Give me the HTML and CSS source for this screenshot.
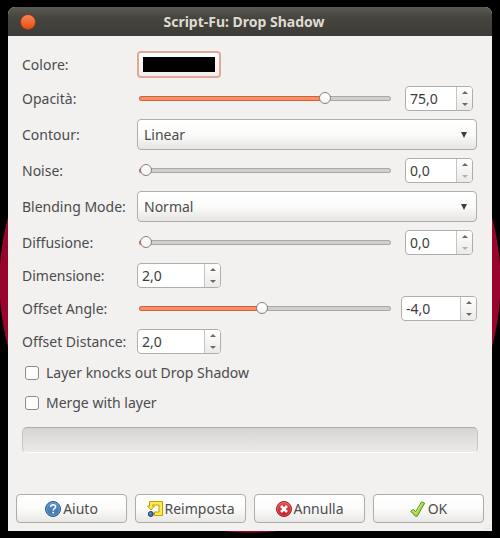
FILE: index.html
```html
<!DOCTYPE html>
<html lang="it">
<head>
  <meta charset="UTF-8" />
  <meta name="viewport" content="width=device-width, initial-scale=1.0"/>
  <title>Script-Fu: Drop Shadow</title>
  <link rel="stylesheet" href="styles.css">
</head>
<body>
  <div class="window">
    <header class="titlebar">
      <button type="button" class="close" aria-label="Chiudi"></button>
      <h1>Script-Fu: Drop Shadow</h1>
    </header>

    <form class="dialog">
      <div class="fields">
        <label for="color">Colore:</label>
        <input type="color" id="color" class="swatch" value="#000000">

        <label for="opacity">Opacità:</label>
        <div class="scale">
          <input type="range" min="0" max="100" value="75" style="--pos: 0.75" aria-label="Opacità">
          <div class="spin">
            <input type="text" id="opacity" value="75,0">
            <div class="arrows">
              <button type="button" class="up" aria-label="Aumenta"></button>
              <button type="button" class="down" aria-label="Diminuisci"></button>
            </div>
          </div>
        </div>

        <label for="contour">Contour:</label>
        <div class="combo">
          <select id="contour">
            <option>Linear</option>
          </select>
        </div>

        <label for="noise">Noise:</label>
        <div class="scale">
          <input type="range" min="0" max="100" value="0" style="--pos: 0" aria-label="Noise">
          <div class="spin">
            <input type="text" id="noise" value="0,0">
            <div class="arrows">
              <button type="button" class="up" aria-label="Aumenta"></button>
              <button type="button" class="down" aria-label="Diminuisci" disabled></button>
            </div>
          </div>
        </div>

        <label for="mode">Blending Mode:</label>
        <div class="combo">
          <select id="mode">
            <option>Normal</option>
          </select>
        </div>

        <label for="spread">Diffusione:</label>
        <div class="scale">
          <input type="range" min="0" max="100" value="0" style="--pos: 0" aria-label="Diffusione">
          <div class="spin">
            <input type="text" id="spread" value="0,0">
            <div class="arrows">
              <button type="button" class="up" aria-label="Aumenta"></button>
              <button type="button" class="down" aria-label="Diminuisci" disabled></button>
            </div>
          </div>
        </div>

        <label for="size">Dimensione:</label>
        <div class="spin spin-large">
          <input type="text" id="size" value="2,0">
          <div class="arrows">
            <button type="button" class="up" aria-label="Aumenta"></button>
            <button type="button" class="down" aria-label="Diminuisci"></button>
          </div>
        </div>

        <label for="angle">Offset Angle:</label>
        <div class="scale">
          <input type="range" min="-180" max="180" value="-4" style="--pos: 0.489" aria-label="Offset Angle">
          <div class="spin spin-medium">
            <input type="text" id="angle" value="-4,0">
            <div class="arrows">
              <button type="button" class="up" aria-label="Aumenta"></button>
              <button type="button" class="down" aria-label="Diminuisci"></button>
            </div>
          </div>
        </div>

        <label for="distance">Offset Distance:</label>
        <div class="spin spin-large">
          <input type="text" id="distance" value="2,0">
          <div class="arrows">
            <button type="button" class="up" aria-label="Aumenta"></button>
            <button type="button" class="down" aria-label="Diminuisci"></button>
          </div>
        </div>

        <label class="check"><input type="checkbox"> Layer knocks out Drop Shadow</label>
        <label class="check"><input type="checkbox"> Merge with layer</label>
      </div>

      <progress value="0" max="100" aria-label="Avanzamento"></progress>

      <div class="actions">
        <button type="button">
          <svg width="16" height="16" viewBox="0 0 16 16">
            <defs>
              <linearGradient id="blue" x1="0" y1="0" x2="0" y2="1">
                <stop offset="0" stop-color="#5b8fc4"/>
                <stop offset="1" stop-color="#3a76b0"/>
              </linearGradient>
            </defs>
            <circle cx="8" cy="8" r="7.5" fill="url(#blue)" stroke="#28588c"/>
            <circle cx="8" cy="8" r="6.5" fill="none" stroke="#83aed8" stroke-opacity=".6"/>
            <path d="M5.6 6.1C5.6 4.5 6.7 3.8 8.1 3.8c1.5 0 2.5.8 2.5 2C10.6 7.5 8.2 7.5 8.2 9.6" fill="none" stroke="#fff" stroke-width="1.5"/>
            <rect x="7.4" y="10.8" width="1.7" height="1.7" fill="#fff"/>
          </svg>
          Aiuto
        </button>
        <button type="button">
          <svg width="16" height="16" viewBox="0 0 16 16">
            <path d="M2.5 5V.5h13v14H7.500v-3.500h4.500V4H5.500v1h2L4 9 .5 5z" fill="#fce94f" stroke="#c4a000" stroke-linejoin="round"/>
            <circle cx="3.800" cy="13" r="2.500" fill="#3f6fa8" stroke="#1f3f6c"/>
            <circle cx="3.300" cy="12.400" r="1" fill="#729fcf"/>
          </svg>
          Reimposta
        </button>
        <button type="button">
          <svg width="16" height="16" viewBox="0 0 16 16">
            <defs>
              <linearGradient id="red" x1="0" y1="0" x2="0" y2="1">
                <stop offset="0" stop-color="#e2555a"/>
                <stop offset="1" stop-color="#c0141c"/>
              </linearGradient>
            </defs>
            <circle cx="8" cy="8" r="7.5" fill="url(#red)" stroke="#a51b22"/>
            <circle cx="8" cy="8" r="6.5" fill="none" stroke="#ee8a8c" stroke-opacity=".5"/>
            <path d="M5 5l6 6M11 5l-6 6" stroke="#fff" stroke-width="2.5"/>
          </svg>
          Annulla
        </button>
        <button type="submit">
          <svg width="16" height="16" viewBox="0 0 16 16">
            <path d="M.8 10.2L3.4 8.4l2.2 2.4L11.600.8l3 1.4-7.3 13H5.400z" fill="#a5d64c" stroke="#5c8f1e" stroke-linejoin="round"/>
            <path d="M2.3 10.3l1-.6 2.4 2.6L12 2.2" fill="none" stroke="#c9ec86"/>
          </svg>
          OK
        </button>
      </div>
    </form>
  </div>
</body>
</html>
```

FILE: styles.css
```css
* {
  box-sizing: border-box;
}

body {
  margin: 0;
  padding: 7px 8px;
  min-height: 100vh;
  font-family: "Noto Sans", sans-serif;
  font-size: 14px;
  line-height: 20px;
  color: #4c4c4c;
  background: radial-gradient(circle at 50% 282px, #98042c 250px, #000 251px) #000;
}

input,
select,
button {
  font: inherit;
  color: inherit;
  margin: 0;
}

.window {
  position: relative;
  background-color: #f2f1f0;
  border-radius: 7px 7px 0 0;
  overflow: hidden;
}

/* resize grip */
.window::after {
  content: "";
  position: absolute;
  right: 0;
  bottom: 0;
  width: 10px;
  height: 10px;
  background: radial-gradient(circle, #d2d0ce 1px, transparent 1px) 0 0 / 3px 3px;
  clip-path: polygon(100% 0, 100% 100%, 0 100%);
}

.titlebar {
  display: grid;
  grid-template-columns: 16px 1fr 16px;
  align-items: center;
  height: 29px;
  padding: 0 24px 0 12px;
  background: linear-gradient(#5b5a52, #46453f 35%, #3c3b37);
}

.titlebar h1 {
  margin: 0;
  font-size: 14px;
  line-height: 20px;
  font-weight: bold;
  text-align: center;
  color: #dfdbd2;
}

.close {
  width: 16px;
  height: 16px;
  padding: 0;
  border: 1px solid #8c3d20;
  border-radius: 50%;
  background: linear-gradient(#f8854f, #e64f16);
}

.dialog {
  padding: 15px 8px 8px;
}

.fields {
  display: grid;
  grid-template-columns: 107px 1fr;
  align-items: center;
  gap: 8px;
  padding: 0 7px 0 6px;
}

.fields label {
  white-space: nowrap;
}

.swatch {
  appearance: none;
  width: 84px;
  height: 27px;
  padding: 4px;
  border: 2px solid #e0a898;
  border-radius: 4px;
  background: linear-gradient(#fff, #f0ece9);
}

.swatch::-webkit-color-swatch-wrapper {
  padding: 0;
}

.swatch::-webkit-color-swatch {
  border: none;
}

/* Sliders */
.scale {
  display: grid;
  grid-template-columns: 1fr 76px;
  align-items: center;
  justify-items: center;
  gap: 10px;
  padding-left: 2px;
}

.scale input[type="range"] {
  --fill: calc(6px + (100% - 12px) * var(--pos));
  appearance: none;
  width: 100%;
  height: 12px;
  background: none;
}

.scale input::-webkit-slider-runnable-track {
  height: 5px;
  border: 1px solid transparent;
  border-radius: 3px;
  background:
    linear-gradient(to right, #fb8f62 var(--fill), #d0cfcd var(--fill)) padding-box,
    linear-gradient(to right, #cb6440 var(--fill), #a9a8a6 var(--fill)) border-box;
}

.scale input::-webkit-slider-thumb {
  appearance: none;
  width: 12px;
  height: 12px;
  margin-top: -5px;
  border: 1px solid #858380;
  border-radius: 50%;
  background: linear-gradient(#fff, #f4f3f2);
}

/* Number boxes */
.spin {
  display: flex;
  width: 68px;
  height: 25px;
  border: 1px solid #b0aeab;
  border-radius: 4px;
  background-color: #fff;
  overflow: hidden;
}

.spin-medium {
  width: 76px;
}

.spin-large {
  width: 84px;
}

.spin input {
  flex: 1;
  min-width: 0;
  padding: 0 4px;
  border: none;
  background: none;
  color: #3c3c3c;
}

.arrows {
  display: flex;
  flex-direction: column;
  width: 16px;
  border-left: 1px solid #c6c4c2;
  background: linear-gradient(#fff, #ebeae8);
}

.arrows button {
  display: flex;
  flex: 1;
  align-items: center;
  justify-content: center;
  padding: 0;
  border: none;
  background: none;
}

.arrows button::before {
  content: "";
  border: 3px solid transparent;
}

.arrows .up::before {
  border-top: none;
  border-bottom-color: #6a6a6a;
}

.arrows .down::before {
  border-bottom: none;
  border-top-color: #6a6a6a;
}

.arrows .down:disabled::before {
  border-top-color: #b0b0b0;
}

/* Drop-downs */
.combo {
  position: relative;
}

.combo select {
  display: block;
  appearance: none;
  width: 100%;
  height: 31px;
  padding: 0 24px 0 6px;
  border: 1px solid #b0aeab;
  border-radius: 4px;
  background: linear-gradient(#fff, #fbfbfa 50%, #e6e5e3);
}

.combo::after {
  content: "";
  position: absolute;
  top: 13px;
  right: 10px;
  border: 3px solid transparent;
  border-top: 6px solid #3c3c3c;
  border-bottom: none;
  pointer-events: none;
}

.check {
  grid-column: 1 / -1;
  display: flex;
  align-items: center;
  gap: 7px;
  height: 22px;
  padding-left: 3px;
}

.check input {
  appearance: none;
  width: 14px;
  height: 14px;
  border: 1px solid #8f8d8a;
  border-radius: 3px;
  background-color: #fff;
}

progress {
  appearance: none;
  display: block;
  width: calc(100% - 12px);
  height: 26px;
  margin: 13px 6px 41px;
  border: 1px solid #c6c4c2;
  border-top-color: #b0aeab;
  border-bottom-color: #fff;
  border-radius: 5px;
  background: linear-gradient(#d6d5d3, #ebeae9);
}

progress::-webkit-progress-bar {
  background: none;
}

.actions {
  display: grid;
  grid-template-columns: repeat(4, 1fr);
  gap: 8px;
}

.actions button {
  display: flex;
  align-items: center;
  justify-content: center;
  gap: 2px;
  height: 29px;
  padding: 0;
  border: 1px solid #aeaca9;
  border-radius: 4px;
  background: linear-gradient(#fff, #fbfbfa 50%, #e8e7e5);
}
```
